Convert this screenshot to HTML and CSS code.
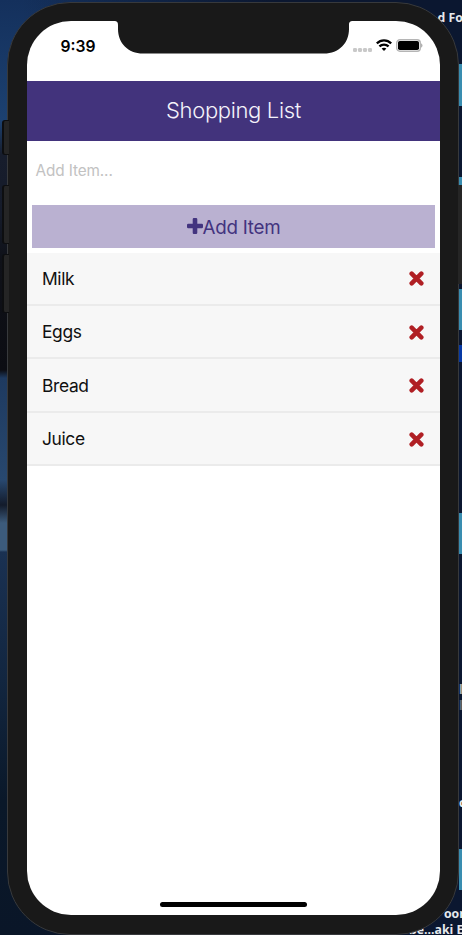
FILE: index.html
```html
<!DOCTYPE html>
<html lang="en">
<head>
<meta charset="utf-8">
<meta name="viewport" content="width=device-width, initial-scale=1">
<title>Shopping List</title>
<link rel="stylesheet" href="styles.css">
</head>
<body>
<svg width="0" height="0" class="defs" aria-hidden="true">
  <symbol id="times" viewBox="0 0 14 14"><path d="M2.5 2.5 11.5 11.5M11.5 2.5 2.5 11.5" fill="none" stroke="currentColor" stroke-width="4.2" stroke-linecap="round"/></symbol>
</svg>
<div class="desktop">
  <i class="thumb t1"></i><i class="thumb t2"></i><i class="thumb t3"></i><i class="thumb t4"></i><i class="thumb t5"></i><i class="thumb t6"></i>
  <span class="label l1">d Fo</span>
  <span class="label l2">oor</span>
  <span class="label l3">be...aki E</span>
  <span class="label l4">l</span>
  <span class="label l5">l</span>
  <span class="label l6">c</span>
  <i class="key k1"></i><i class="key k2"></i><i class="key k3"></i><i class="key k4"></i>
</div>
<div class="phone">
  <div class="screen">
    <svg class="notch" viewBox="0 0 239 33" width="239" height="33"><path d="M0 0C3 0 4 1 4 4V8C4 22 14 32.5 29 32.5H210C225 32.5 235 22 235 8V4C235 1 236 0 239 0Z" fill="#191919"/></svg>
    <div class="status">
      <span class="time">9:39</span>
      <div class="indicators">
        <svg width="19" height="4" viewBox="0 0 19 4" fill="#c9c9c9"><rect x="0" width="4" height="4" rx="1.3"/><rect x="5" width="4" height="4" rx="1.3"/><rect x="10" width="4" height="4" rx="1.3"/><rect x="15" width="4" height="4" rx="1.3"/></svg>
        <svg class="wifi" width="16" height="12" viewBox="0 0 16 12" fill="none" stroke="#000" stroke-width="2.3"><path d="M.8 4.4C4.8.3 11.2.3 15.2 4.4M3.4 7.4C6 4.9 10 4.9 12.6 7.4"/><path d="M8 12 5.6 9.6C7 8.4 9 8.4 10.4 9.6Z" fill="#000" stroke="none"/></svg>
        <svg class="battery" width="27" height="13" viewBox="0 0 27 13"><rect x=".7" y=".7" width="23.6" height="11.6" rx="3.2" fill="#fff" stroke="#b5b5b5" stroke-width="1.4"/><rect x="2" y="2" width="21" height="9" rx="1.8"/><path d="M25.2 4.3C26.9 5 26.9 8 25.2 8.7Z" fill="#a0a0a0"/></svg>
      </div>
    </div>
    <header class="header"><h1>Shopping List</h1></header>
    <div class="form">
      <input class="input" type="text" placeholder="Add Item..." aria-label="Item">
      <button class="add"><svg width="16" height="16" viewBox="0 0 16 16"><path d="M6.9 0H9.1Q10.3 0 10.3 1.2V5.7H14.8Q16 5.7 16 6.9V9.1Q16 10.3 14.8 10.3H10.3V14.8Q10.3 16 9.1 16H6.9Q5.7 16 5.7 14.8V10.3H1.2Q0 10.3 0 9.1V6.9Q0 5.7 1.2 5.7H5.7V1.2Q5.7 0 6.9 0Z" fill="currentColor"/></svg><span>Add Item</span></button>
    </div>
    <ul class="list">
      <li><span>Milk</span><svg><use href="#times"/></svg></li>
      <li><span>Eggs</span><svg><use href="#times"/></svg></li>
      <li><span>Bread</span><svg><use href="#times"/></svg></li>
      <li><span>Juice</span><svg><use href="#times"/></svg></li>
    </ul>
    <div class="home"></div>
  </div>
</div>
</body>
</html>
```
FILE: styles.css
```css
* { box-sizing: border-box; }
body {
  margin: 0;
  width: 462px;
  height: 935px;
  overflow: hidden;
  position: relative;
  font-family: Inter, "Liberation Sans", sans-serif;
  background: linear-gradient(90deg, transparent 5%, #0b1730 60%),
    linear-gradient(#14305c 0, #1c4171 120px, #171d2c 155px, #151b2a 215px, #0f1118 260px, #0c0d13 370px, #1e3a60 378px, #28486f 480px, #131b2b 505px, #3c5b7c 523px, #3c5b7c 550px, #1a3152 552px, #122640 680px, #0a1829 800px, #0a1628 935px);
}
.defs { position: absolute; }
.desktop { position: absolute; inset: 0; overflow: hidden; }
.thumb { position: absolute; left: 459px; width: 3px; background: #398db0; }
.t1 { top: 64px; height: 42px; }
.t2 { top: 177px; height: 9px; }
.t3 { top: 289px; height: 41px; }
.t4 { top: 345px; height: 17px; background: #0639a5; }
.t5 { top: 513px; height: 41px; }
.t6 { top: 849px; height: 41px; }
.label {
  position: absolute;
  font: bold 12.3px/16px "Open Sans", sans-serif;
  color: #e6e9ed;
  white-space: nowrap;
}
.l1 { left: 437.5px; top: 10px; }
.l2 { left: 444px; top: 906px; }
.l3 { left: 409px; top: 922px; }
.l4 { left: 459px; top: 682px; opacity: .7; }
.l5 { left: 459px; top: 698px; opacity: .4; }
.l6 { left: 459px; top: 795px; }
.key {
  position: absolute;
  z-index: 2;
  left: 2px;
  width: 7px;
  background: #252525;
  border: solid #0d0e10;
  border-width: 1px 0 1px 2px;
  border-radius: 3px 0 0 3px;
}
.k1 { top: 120px; height: 35px; }
.k2 { top: 185px; height: 59px; }
.k3 { top: 254px; height: 59px; }
.k4 { left: 458px; width: 4px; top: 185px; height: 99px; border: 0; border-radius: 0; }
.phone {
  position: relative;
  z-index: 1;
  width: 452px;
  height: 933px;
  margin: 2px 0 0 7.4px;
  padding: 18px 18px 18px 18.6px;
  background: #191919;
  border: 1px solid #37393c;
  border-radius: 63px;
}
.screen {
  position: relative;
  width: 413px;
  height: 894px;
  background: #fff;
  border-radius: 44px;
  overflow: hidden;
  display: flex;
  flex-direction: column;
}
.notch { position: absolute; left: 87px; top: 0; }
.status {
  height: 59.5px;
  flex: none;
  display: flex;
  justify-content: space-between;
  padding: 15px 16.5px 0 33.5px;
}
.time { font-size: 15.7px; line-height: 21px; font-weight: 600; letter-spacing: 0; }
.indicators { display: flex; align-items: flex-start; padding-top: 3px; }
.indicators svg:first-child { margin-top: 9px; }
.wifi { margin: 0 4.5px 0 4px; }
.header {
  height: 60.5px;
  flex: none;
  background: #42337c;
  display: flex;
  align-items: center;
  justify-content: center;
}
h1 { margin: 0 0 2px; color: #f4f2fa; font-size: 22px; line-height: 30px; font-weight: 350; letter-spacing: -.35px; }
.form { height: 111.5px; flex: none; padding: 0 5px 5px; display: flex; flex-direction: column; }
.input {
  height: 59.5px;
  border: 0;
  padding: 0 3.5px;
  background: none;
  font: 400 15.3px/20px Inter, sans-serif;
  letter-spacing: -.1px;
  color: #000;
  outline: 0;
}
.input::placeholder { color: #c2c2c2; opacity: 1; }
.add {
  height: 42.5px;
  margin-top: 5px;
  border: 0;
  padding: 0;
  background: #bab1d1;
  color: #43347f;
  display: flex;
  align-items: center;
  justify-content: center;
  font: 400 18.8px/24px Inter, sans-serif;
  letter-spacing: -.25px;
}
.add span { padding-top: 3px; }
.list { margin: 0; padding: 0; list-style: none; }
.list li {
  height: 53.4px;
  background: #f7f7f7;
  border-bottom: 2px solid #ebebeb;
  padding: 1.5px 16px 0 15px;
  display: flex;
  align-items: center;
  justify-content: space-between;
  font-size: 17.4px;
  line-height: 22px;
  color: #101010;
  letter-spacing: -.35px;
}
.list svg { width: 15px; height: 15px; color: #b01f24; }
.home { width: 147px; height: 5px; margin: auto auto 8px; border-radius: 3px; background: #000; }
```
